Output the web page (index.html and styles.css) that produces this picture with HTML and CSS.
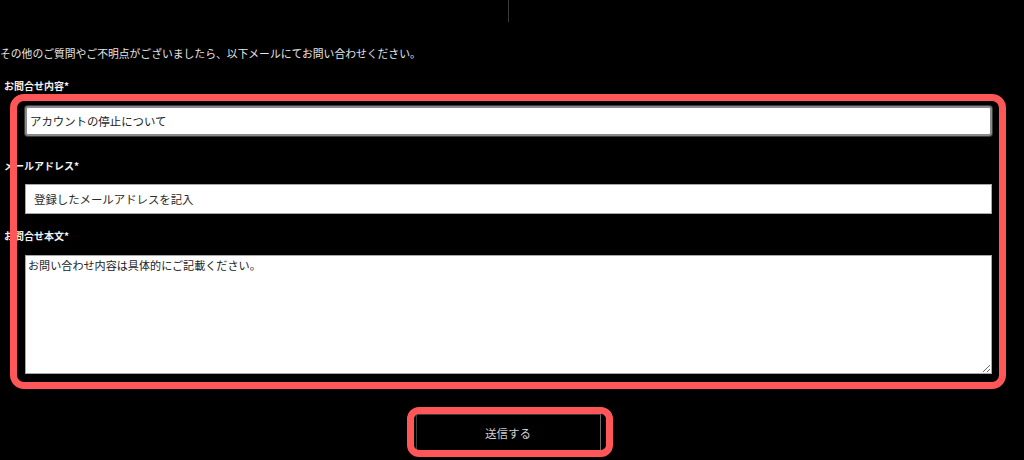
FILE: index.html
```html
<!DOCTYPE html>
<html lang="ja">
<head>
<meta charset="utf-8">
<title>お問い合わせ</title>
<link rel="stylesheet" href="styles.css">
</head>
<body>
<div class="page">
  <div class="divider"></div>
  <p class="intro">その他のご質問やご不明点がございましたら、以下メールにてお問い合わせください。</p>
  <form class="form">
    <label class="label label-first">お問合せ内容*</label>
    <input class="field field-focus" type="text" value="アカウントの停止について">
    <label class="label label-second">メールアドレス*</label>
    <input class="field field-mail" type="text" placeholder="登録したメールアドレスを記入">
    <label class="label label-third">お問合せ本文*</label>
    <textarea class="area">お問い合わせ内容は具体的にご記載ください。</textarea>
    <div class="actions">
      <button class="submit" type="button">送信する</button>
    </div>
  </form>
  <div class="mark mark-form"></div>
  <div class="mark mark-button"></div>
</div>
</body>
</html>
```

FILE: styles.css
```css
html, body {
  margin: 0;
  padding: 0;
  background: #000;
}
body {
  width: 1024px;
  height: 460px;
  overflow: hidden;
  font-family: "Noto Sans CJK JP", "Noto Sans", sans-serif;
  color: #eee;
}
.page {
  position: relative;
  width: 1024px;
  height: 460px;
}
.divider {
  margin-left: 508px;
  width: 1px;
  height: 22px;
  background: #3a3a3a;
}
.intro {
  margin: 23px 0 0 0;
  font-size: 10.8px;
  line-height: 16px;
  color: #e6e6e6;
  white-space: nowrap;
}
.form {
  display: flex;
  flex-direction: column;
  align-items: flex-start;
}
.label {
  display: block;
  margin-left: 4px;
  font-size: 10px;
  line-height: 14px;
  font-weight: bold;
  color: #f2f2f2;
}
.label-first { margin-top: 18px; }
.label-second { margin-top: 23px; }
.label-third { margin-top: 15px; }
.field {
  box-sizing: border-box;
  margin-left: 25px;
  width: 967px;
  height: 30px;
  background: #fff;
  font-family: "Noto Sans CJK JP", "Noto Sans", sans-serif;
  font-size: 11.4px;
  color: #222;
  outline: none;
}
.field-focus {
  margin-top: 13px;
  border: 2px solid #8a8a8a;
  box-shadow: 0 0 0 1px #3c3c3c;
  border-radius: 3px;
  padding: 0 3px;
}
.field-mail {
  margin-top: 11px;
  border: 1px solid #a8a8a8;
  border-radius: 0;
  padding: 0 8px;
}
.field-mail::placeholder {
  color: #2a2a2a;
  opacity: 1;
}
.area {
  box-sizing: border-box;
  margin: 12px 0 0 25px;
  width: 967px;
  height: 119px;
  border: 1px solid #a8a8a8;
  padding: 1px 2px;
  background: #fff;
  font-family: "Noto Sans CJK JP", "Noto Sans", sans-serif;
  font-size: 11.1px;
  line-height: 16px;
  color: #222;
  outline: none;
}
.actions {
  align-self: stretch;
  display: flex;
  justify-content: center;
  margin-top: 40px;
  padding-right: 8px;
}
.submit {
  width: 185px;
  height: 38px;
  background: #000;
  border: 1px solid #3a3a3a;
  border-right-color: #6a6a6a;
  color: #d0d0d0;
  font-family: "Noto Sans CJK JP", "Noto Sans", sans-serif;
  font-size: 11.5px;
}
.mark {
  position: absolute;
  box-sizing: border-box;
  border: 7px solid #ff5757;
  pointer-events: none;
}
.mark-form {
  left: 10px;
  top: 94px;
  width: 996px;
  height: 295px;
  border-radius: 14px;
}
.mark-button {
  left: 407px;
  top: 407px;
  width: 206px;
  height: 50px;
  border-radius: 12px;
}
```
